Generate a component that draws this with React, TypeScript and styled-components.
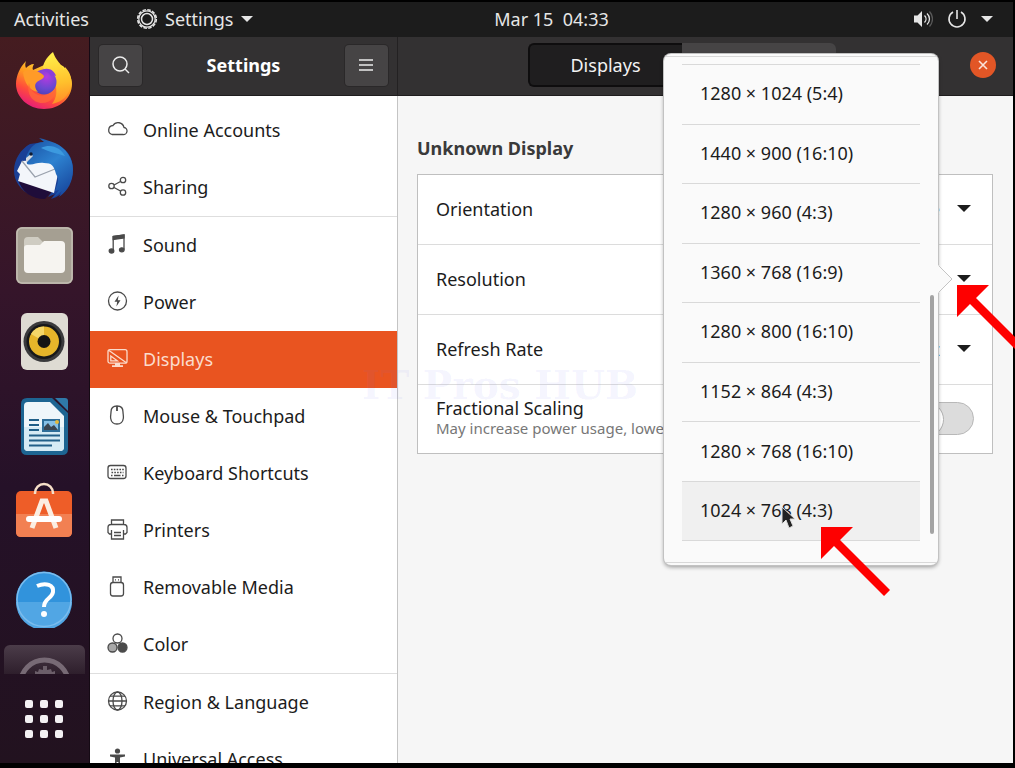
import React from 'react';
import styled, { createGlobalStyle } from 'styled-components';

const GlobalStyle = createGlobalStyle`
  * { box-sizing: border-box; }
  body { margin: 0; background: #000; }
  body, button, input { font-family: "Noto Sans", "Open Sans", sans-serif; font-size: 18px; line-height: 24px; }
  button { border: 0; padding: 0; background: none; color: inherit; cursor: pointer; }
  svg { display: block; flex: none; }
`;

const Desktop = styled.div`
  height: 100vh;
  padding: 2px 2px 5px 0;
  display: flex;
  flex-direction: column;
  overflow: hidden;
  background: #000;
`;

const TopBar = styled.header`
  flex: none;
  height: 35px;
  display: grid;
  grid-template-columns: 5fr auto 4fr;
  align-items: center;
  padding: 0 20px 2px 14px;
  background: #1c1c1c;
  color: #e6e6e6;
`;

const BarGroup = styled.div<{ $end?: boolean }>`
  display: flex;
  align-items: center;
  justify-content: ${(p) => (p.$end ? 'flex-end' : 'flex-start')};
  gap: ${(p) => (p.$end ? '14px' : '47px')};
`;

const BarButton = styled.button`
  display: flex;
  align-items: center;
  gap: 7px;
  white-space: pre;
`;

const Workspace = styled.div`
  flex: 1;
  min-height: 0;
  display: flex;
`;

const Dock = styled.nav`
  flex: none;
  width: 90px;
  padding: 18px 4px 24px 3px;
  display: flex;
  flex-direction: column;
  align-items: center;
  justify-content: space-between;
  background: linear-gradient(#451c20, #35152a 35%, #251128 62%, #22121f);
  border-right: 1px solid #150a14;
`;

const DockApps = styled.div`
  display: flex;
  flex-direction: column;
  align-items: center;
  gap: 30px;
`;

const DockButton = styled.button`
  display: flex;
  align-items: center;
  justify-content: center;
  width: 56px;
  height: 56px;
`;

const DockTile = styled.button`
  width: 81px;
  height: 29px;
  margin-top: -12px;
  overflow: hidden;
  border-radius: 6px 6px 0 0;
  background: linear-gradient(#4b3c49, #2e1f2c);
`;

const Window = styled.div`
  flex: 1;
  min-width: 0;
  display: grid;
  grid-template-columns: 308px 1fr;
  grid-template-rows: 59px 1fr;
`;

const SideHeader = styled.div`
  display: flex;
  align-items: center;
  justify-content: space-between;
  padding: 0 9px 2px;
  background: #333132;
  border-right: 1px solid #232122;
  border-bottom: 1px solid #1f1d1e;
  color: #fff;
`;

const HeaderTitle = styled.h1`
  margin: 0;
  font-size: 18px;
  line-height: 24px;
  font-weight: 700;
`;

const HeaderButton = styled.button`
  width: 43px;
  height: 41px;
  display: grid;
  place-items: center;
  border-radius: 4px;
  background: #464445;
  box-shadow: 0 0 0 1px #2a2829;
  color: #ececec;
`;

const MainHeader = styled.div`
  display: grid;
  grid-template-columns: 1fr auto 1fr;
  align-items: center;
  padding: 0 17px 2px 0;
  background: #333132;
  border-bottom: 1px solid #1f1d1e;
  color: #f2f2f2;
`;

const Switcher = styled.div`
  grid-column: 2;
  display: flex;
  margin-right: 31px;
`;

const SwitcherTab = styled.button<{ $active?: boolean }>`
  width: 154px;
  height: 44px;
  border: 2px solid ${(p) => (p.$active ? '#0e0d0e' : '#464445')};
  border-radius: ${(p) => (p.$active ? '6px 0 0 6px' : '0 6px 6px 0')};
  border-right-width: ${(p) => (p.$active ? 0 : 2)}px;
  background: ${(p) => (p.$active ? '#1f1e1f' : '#464445')};
`;

const CloseButton = styled.button`
  justify-self: end;
  width: 26px;
  height: 26px;
  display: grid;
  place-items: center;
  border-radius: 50%;
  background: #e25626;
  color: #fbe3da;
`;

const Sidebar = styled.nav`
  min-height: 0;
  overflow: hidden;
  padding-top: 6px;
  background: #fff;
  border-right: 1px solid #c4c4c4;
`;

const SideGroup = styled.ul`
  margin: 0;
  padding: 0;
  list-style: none;
  & + & { border-top: 1px solid #dedede; }
`;

const SideLink = styled.a<{ $active?: boolean }>`
  display: flex;
  align-items: center;
  gap: 15px;
  height: 57px;
  padding: 0 0 2px 17px;
  text-decoration: none;
  white-space: nowrap;
  color: ${(p) => (p.$active ? '#fbdccc' : '#1c1c1c')};
  background: ${(p) => (p.$active ? '#e95420' : 'transparent')};
  svg { color: ${(p) => (p.$active ? '#fbdccc' : '#4a4a4a')}; }
`;

const Main = styled.main`
  min-width: 0;
  padding: 40px 20px 0 19px;
  background: #f6f6f6;
`;

const SectionTitle = styled.h2`
  margin: 0 0 14px;
  font-size: 18px;
  line-height: 24px;
  font-weight: 700;
  color: #3a3a3a;
`;

const Card = styled.div`
  background: #fff;
  border: 1px solid #bfbfbf;
`;

const Row = styled.div`
  position: relative;
  height: 70px;
  padding: 0 18px 2px;
  display: flex;
  align-items: center;
  justify-content: space-between;
  gap: 20px;
  color: #1c1c1c;
  & + & { border-top: 1px solid #dcdcdc; }
  &:first-child, &:last-child { height: 69px; }
`;

const RowText = styled.label`
  min-width: 0;
  display: flex;
  flex-direction: column;
  line-height: 20px;
`;

const RowHint = styled.span`
  font-size: 15px;
  line-height: 20px;
  color: #777;
  white-space: nowrap;
  overflow: hidden;
  text-overflow: ellipsis;
`;

const ValueButton = styled.button`
  display: flex;
  align-items: center;
  gap: 17px;
  padding-right: 3px;
`;

const Toggle = styled.input`
  appearance: none;
  flex: none;
  width: 65px;
  height: 33px;
  margin: 0;
  border: 1px solid #b8b8b8;
  border-radius: 17px;
  background: #dcdcdc;
  &::before {
    content: "";
    display: block;
    width: 33px;
    height: 33px;
    margin: -1px;
    border: 1px solid #b0b0b0;
    border-radius: 50%;
    background: #fff;
  }
`;

const Popover = styled.div`
  position: absolute;
  z-index: 2;
  right: 54px;
  top: -191px;
  width: 274px;
  height: 511px;
  padding: 2px 0;
  border-radius: 7px;
  background: #fafafa;
  box-shadow: 0 0 0 1px #c2c2c2, 0 2px 4px rgba(0, 0, 0, 0.4);
`;

const PopoverTip = styled.svg`
  position: absolute;
  left: 274px;
  top: 211px;
`;

const PopoverScroll = styled.div`
  height: 507px;
  margin: 0 2px;
  padding: 7px 16px 0;
  overflow: hidden;
  border-top: 1px solid #d8d8d8;
  border-bottom: 1px solid #d8d8d8;
`;

const ModeList = styled.div`
  height: 536px;
  display: grid;
  grid-auto-rows: 1fr;
`;

const ModeButton = styled.button<{ $hover?: boolean }>`
  padding: 0 18px 2px;
  text-align: left;
  color: #1c1c1c;
  border-top: 1px solid #d9d9d9;
  background: ${(p) => (p.$hover ? '#f0f0f0' : 'transparent')};
`;

const ScrollThumb = styled.div`
  position: absolute;
  right: 4px;
  top: 241px;
  width: 4px;
  height: 239px;
  border-radius: 2px;
  background: #a3a3a3;
`;

const Pointer = styled.svg`
  position: absolute;
  left: 117px;
  top: 452px;
`;

const Callout = styled.svg<{ $left: number; $top: number }>`
  position: absolute;
  left: ${(p) => p.$left}px;
  top: ${(p) => p.$top}px;
`;

const Watermark = styled.div`
  position: absolute;
  z-index: 1;
  left: -56px;
  top: -14px;
  font-family: "DejaVu Serif", serif;
  font-size: 39px;
  font-weight: 700;
  line-height: 28px;
  white-space: nowrap;
  color: rgba(110, 110, 240, 0.07);
  pointer-events: none;
`;

const Caret = ({ w = 14 }: { w?: number }) => (
  <svg width={w} height={w / 2} viewBox="0 0 14 7"><path d="M0 0h14L7 7z" fill="currentColor" /></svg>
);

const Glyph = ({ children, size = 21 }: { children: React.ReactNode; size?: number }) => (
  <svg width={size} height={size} viewBox="0 0 21 21" fill="none" stroke="currentColor" strokeWidth="1.3">{children}</svg>
);

const icons = {
  cloud: <Glyph><path d="M5 15.500h11a3.500 3.500 0 0 0 1-7A6 6 0 0 0 6 6.500 4.600 4.600 0 0 0 5 15.500z" /></Glyph>,
  share: <Glyph><circle cx="4.500" cy="10" r="2.700" /><circle cx="16" cy="4" r="2.700" /><circle cx="16" cy="16.500" r="2.700" /><path d="M7 9l6.500-3.500M7 11.500l6.500 3.500" /></Glyph>,
  sound: <Glyph><path d="M6.200 17V2.500L17 1v14.500" /><path d="M6.200 2.500L17 1v3L6.200 5.500z" fill="currentColor" /><ellipse cx="4.500" cy="17" rx="2.300" ry="2" fill="currentColor" /><ellipse cx="14.800" cy="15.800" rx="2.300" ry="2" fill="currentColor" /></Glyph>,
  power: <Glyph><circle cx="10.500" cy="10" r="9" /><path d="M11.600 4.500L7.500 10.700h2.700L9.400 15.500 13.500 9.300h-2.700z" fill="currentColor" stroke="none" /></Glyph>,
  display: <Glyph><rect x="1" y="1.700" width="19" height="13.500" rx="2" /><path d="M2 2.500l17 12M3.800 8v4.800h6.500z" /><path d="M8 15h5v2.300h3v1.700H5v-1.700h3z" fill="currentColor" stroke="none" /></Glyph>,
  mouse: <Glyph><path d="M10 1C5.500 1 4 3 4 7c0 2-.7 4-.3 6.500C4.200 17 6.500 19 10 19s5.800-2 6.300-5.500C16.700 11 16 9 16 7c0-4-1.500-6-6-6z" /><path d="M10 1v5" strokeWidth="1.800" /></Glyph>,
  keyboard: <Glyph><rect x="1" y="3.500" width="18" height="13" rx="2.500" /><path d="M4 7.500h13M4.500 10.500h12" strokeDasharray="1.600 1.200" /><path d="M4 13.500h1.500M7 13.500h6.500M15 13.500h1.500" /></Glyph>,
  printer: <Glyph><path d="M4.500 5.500V1h12v4.500M4 15H2.500L1 13.500v-5c0-2 1-3 3-3h13c2 0 3 1 3 3v5L18.500 15H17" /><path d="M4.500 11v9h12v-9M7 13.500h7M7 16.500h7" /></Glyph>,
  usb: <Glyph><rect x="3.500" y="6.500" width="13" height="13.500" rx="2.500" /><path d="M6 6V1h8v5M8 3.800h1M11 3.800h1" /></Glyph>,
  color: <Glyph><circle cx="10.500" cy="5.500" r="4.500" /><circle cx="5.500" cy="14.500" r="4.500" fill="#a8a8a8" /><circle cx="15.500" cy="14.500" r="4.500" fill="currentColor" /></Glyph>,
  globe: <Glyph><circle cx="10.500" cy="10" r="9" /><ellipse cx="10.500" cy="10" rx="4.500" ry="9" /><path d="M1.500 10h18M3 5.200h15M3 14.800h15" /></Glyph>,
  access: <Glyph><circle cx="10.500" cy="3" r="2.600" fill="currentColor" stroke="none" /><path d="M3 6.500h15v2l-5 1V20h-1.600v-6H9.600v6H8V9.500l-5-1z" fill="currentColor" stroke="none" /></Glyph>,
};

type IconName = keyof typeof icons;

const groups: { icon: IconName; label: string }[][] = [
  [
    { icon: 'cloud', label: 'Online Accounts' },
    { icon: 'share', label: 'Sharing' },
  ],
  [
    { icon: 'sound', label: 'Sound' },
    { icon: 'power', label: 'Power' },
    { icon: 'display', label: 'Displays' },
    { icon: 'mouse', label: 'Mouse & Touchpad' },
    { icon: 'keyboard', label: 'Keyboard Shortcuts' },
    { icon: 'printer', label: 'Printers' },
    { icon: 'usb', label: 'Removable Media' },
    { icon: 'color', label: 'Color' },
  ],
  [
    { icon: 'globe', label: 'Region & Language' },
    { icon: 'access', label: 'Universal Access' },
  ],
];

const modes = [
  '1280 × 1024 (5:4)',
  '1440 × 900 (16:10)',
  '1280 × 960 (4:3)',
  '1360 × 768 (16:9)',
  '1280 × 800 (16:10)',
  '1152 × 864 (4:3)',
  '1280 × 768 (16:10)',
  '1024 × 768 (4:3)',
  '800 × 600 (4:3)',
];

const Firefox = () => (
  <svg width="56" height="62" viewBox="0 0 56 62">
    <defs>
      <linearGradient id="ffBody" x1="0.8" y1="0.1" x2="0.3" y2="1">
        <stop offset="0" stopColor="#ffe83f" /><stop offset="0.4" stopColor="#ff9a1f" /><stop offset="0.7" stopColor="#ff4b3c" /><stop offset="1" stopColor="#e51a7c" />
      </linearGradient>
      <radialGradient id="ffGlobe" cx="0.6" cy="0.3" r="0.8">
        <stop offset="0" stopColor="#b53ae0" /><stop offset="0.6" stopColor="#6a48d0" /><stop offset="1" stopColor="#4a3fb0" />
      </radialGradient>
      <linearGradient id="ffFlame" x1="0.5" y1="0" x2="0.6" y2="1">
        <stop offset="0" stopColor="#fff04a" /><stop offset="0.6" stopColor="#ffc02c" /><stop offset="1" stopColor="#ff8b28" />
      </linearGradient>
    </defs>
    <path d="M10 9c-1 3-1 5 0 7 2-2 5-4 8-4-1 2-2 4-1 6l18-8 12 4c6 6 9 12 9 18 0 14-12 25-28 25S0 45 0 32c0-8 4-17 10-23z" fill="url(#ffBody)" />
    <path d="M37 0c2 6 5 9 8 13 2 1 2 4 2 5 2-1 2-2 2-3 5 5 7 11 6 18-2 11-9 17-19 19 5-6 6-15 2-23-3-6-9-9-11-14 1-6 5-11 10-15z" fill="url(#ffFlame)" />
    <circle cx="28" cy="30" r="12.500" fill="url(#ffGlobe)" />
    <path d="M7 20c5-3 10-2 14-1 3 2 6 3 7 5 0 3-5 4-7 6-3 2-2 7 1 10-8-1-14-9-15-20z" fill="#ff9b28" />
    <path d="M13 31c1 9 8 14 17 12 5-1 9-5 10-9 1 10-5 17-14 17-9 0-16-9-13-20z" fill="#ff663a" opacity="0.800" />
    <path d="M26 18c6-3 12 0 14 6-4-2-5 0-4 2-2-5-6-7-10-8z" fill="#8b3ddb" />
  </svg>
);

const Thunderbird = () => (
  <svg width="62" height="62" viewBox="0 0 62 62">
    <defs>
      <linearGradient id="tbBody" x1="0.2" y1="0" x2="0.8" y2="1">
        <stop offset="0" stopColor="#1c56a8" /><stop offset="0.45" stopColor="#2d82d0" /><stop offset="1" stopColor="#17459c" />
      </linearGradient>
    </defs>
    <path d="M31 4c18 0 29 12 29 27 0 14-8 26-22 30l4-5-7 3 5-7-28-6 6 11C8 53 1 43 1 33 1 21 8 11 17 6z" fill="#1a3f95" />
    <path d="M5 41l10 4 14 6 10 2-7 8C19 61 8 54 5 41z" fill="#1f0d3a" />
    <path d="M9 23l32-2 5 10-5 24L5 43l2-7-3-3z" fill="#f3f6fa" />
    <path d="M9 23l13 16 20-8" stroke="#9aa2ad" strokeWidth="1.300" fill="none" />
    <path d="M13 19C17 9 22 4 31 4L26 0c6 1 10 3 16 5 11 5 18 15 18 27 0 11-5 21-14 27l3-6-9 7 6-8-4 1c2-7 5-11 1-17-2-8-4-11-12-11-8-1-11 3-17 1z" fill="url(#tbBody)" />
    <path d="M28 10c10-5 20 0 24 8-9-3-16-4-24-8z" fill="#3c9adf" />
    <path d="M13 20l5-4 2 2-7 7z" fill="#d8dbe0" /><circle cx="18" cy="16" r="1.700" fill="#0f1b33" />
  </svg>
);

const Files = () => (
  <svg width="57" height="57" viewBox="0 0 57 57">
    <rect width="57" height="57" rx="6" fill="#a59f92" /><rect x="1" y="1" width="55" height="55" rx="5" fill="none" stroke="#c2bdb2" strokeWidth="1.500" />
    <path d="M8 43V14q0-4 4-4h10l5 5h18q4 0 4 4v24z" fill="#cfccc2" />
    <path d="M8 21q0-3 3-3h13l4-4h17q4 0 4 4v24q0 4-4 4H12q-4 0-4-4z" fill="#f6f4f0" />
  </svg>
);

const Rhythmbox = () => (
  <svg width="56" height="57" viewBox="0 0 56 57">
    <rect x="5" width="47" height="57" rx="6" fill="#dedbd3" /><circle cx="28" cy="28.500" r="20.500" fill="#3a3a3c" /><circle cx="28" cy="28.500" r="17.500" fill="#17181a" />
    <circle cx="28" cy="28.500" r="15" fill="#e6b52a" /><path d="M28 28.500L15 21a15 15 0 0 1 13-7.500z" fill="#f5d768" /><circle cx="28" cy="28.500" r="6.500" fill="#141414" />
  </svg>
);

const Writer = () => (
  <svg width="56" height="58" viewBox="0 0 56 58">
    <path d="M11 0h25l16 15v36q0 6-6 6H11q-6 0-6-6V6q0-6 6-6z" fill="#1d6592" />
    <path d="M39 0h10q3 0 3 3v10z" fill="#2f79a8" />
    <path d="M12 4h22l14 14v31q0 4-4 4H12q-4 0-4-4V8q0-4 4-4z" fill="#eef6fa" />
    <path d="M8 29h40v20q0 4-4 4H12q-4 0-4-4z" fill="#d5ebf5" />
    <path d="M13 22h10M13 27h10M13 32h10M13 37.500h31M13 42.500h31M13 47.500h23" stroke="#205f88" strokeWidth="2.200" />
    <rect x="26" y="21" width="18" height="13" fill="#2d6d98" /><rect x="28" y="23" width="14" height="9" fill="#86c0e5" /><path d="M28 32v-3l4-4 3 4 3-2 4 5z" fill="#3b4550" /><circle cx="41" cy="24" r="2" fill="#e3b83a" />
  </svg>
);

const Software = () => (
  <svg width="56" height="62" viewBox="0 0 56 62">
    <rect y="9" width="56" height="46" rx="5" fill="#ee5d28" /><path d="M0 32h56v18q0 5-5 5H5q-5 0-5-5z" fill="#f28052" />
    <path d="M19 12v-1a9 9 0 0 1 18 0v1" fill="none" stroke="#f6dfc8" strokeWidth="2.500" />
    <path d="M16 46l10-27h4l10 27" fill="none" stroke="#fbeee2" strokeWidth="5" /><rect x="10" y="34" width="36" height="6" rx="3" fill="#fff" />
  </svg>
);

const Help = () => (
  <svg width="56" height="57" viewBox="0 0 56 57">
    <circle cx="28" cy="28.500" r="28" fill="#3193dc" /><path d="M0 31h56a28 28 0 0 1-56 0z" fill="#51a6e4" /><circle cx="28" cy="28.500" r="27" fill="none" stroke="#7bbced" strokeWidth="1.500" />
    <path d="M21 15c9-4 17-1 16 6-1 7-9 6-9 15" fill="none" stroke="#fff" strokeWidth="4" /><circle cx="28" cy="43" r="3" fill="#fff" />
  </svg>
);

const DockGear = () => (
  <svg width="81" height="29" viewBox="0 0 81 29">
    <circle cx="40.500" cy="39" r="24" fill="none" stroke="#776a75" strokeWidth="5" />
    <path d="M31 29v-3l3 1 1-3 4 1v-4h4v4l4-1 1 3 3-1v3z" fill="#6b5e69" />
  </svg>
);

const AppGrid = () => (
  <svg width="40" height="40" viewBox="0 0 40 40" fill="#f3f1f3">
    {[0, 15, 30].map((y) => [0, 15, 30].map((x) => <rect key={`${x}-${y}`} x={x + 1} y={y + 1} width="8" height="8" rx="2" />))}
  </svg>
);

const dockApps = [
  { name: 'Firefox', art: <Firefox /> },
  { name: 'Thunderbird', art: <Thunderbird /> },
  { name: 'Files', art: <Files /> },
  { name: 'Rhythmbox', art: <Rhythmbox /> },
  { name: 'Writer', art: <Writer /> },
  { name: 'Software', art: <Software /> },
  { name: 'Help', art: <Help /> },
];

const RedArrow = ({ left, top }: { left: number; top: number }) => (
  <Callout $left={left} $top={top} width="69" height="69" viewBox="0 0 69 69">
    <path d="M0 0h32L19 13l50 50-6 6L13 19 0 32z" fill="#fe0000" />
  </Callout>
);

const ResolutionPopover = () => (
  <Popover>
    <PopoverTip width="15" height="28" viewBox="0 0 15 28">
      <path d="M0 0l14 14L0 28z" fill="#fafafa" /><path d="M1 1l13 13L1 27" fill="none" stroke="#c4c4c4" />
    </PopoverTip>
    <PopoverScroll>
      <ModeList>
        {modes.map((mode) => <ModeButton key={mode} $hover={mode.startsWith('1024')}>{mode}</ModeButton>)}
      </ModeList>
    </PopoverScroll>
    <ScrollThumb />
    <Pointer width="16" height="24" viewBox="0 0 16 24">
      <path d="M1 1v17l4-4 3 8 4-2-3-7h5z" fill="#222" stroke="#ddd" />
    </Pointer>
    <RedArrow left={157} top={473} />
    <RedArrow left={293} top={231} />
  </Popover>
);

export default function App() {
  return (
    <>
      <GlobalStyle />
      <Desktop>
        <TopBar>
          <BarGroup>
            <BarButton>Activities</BarButton>
            <BarButton>
              <svg width="22" height="22" viewBox="0 0 22 22" fill="none" stroke="currentColor">
                <circle cx="11" cy="11" r="8.200" strokeWidth="1.200" /><circle cx="11" cy="11" r="5.500" strokeWidth="1.500" />
                <circle cx="11" cy="11" r="9.300" strokeWidth="1.600" strokeDasharray="3.500 1.370" />
              </svg>
              Settings
              <Caret w={12} />
            </BarButton>
          </BarGroup>
          <BarButton>{'Mar 15  04:33'}</BarButton>
          <BarGroup $end>
            <BarButton aria-label="Volume">
              <svg width="20" height="20" viewBox="0 0 20 20" fill="none" stroke="currentColor" strokeWidth="1.300">
                <path d="M1 6.500h3.500L9 2v16l-4.500-4.500H1z" fill="currentColor" stroke="none" />
                <path d="M11.500 6.500c2 2 2 5 0 7M14 4.500c3.300 3 3.300 8 0 11" /><path d="M16.500 2.500c4 4.500 4 10.500 0 15" opacity="0.300" />
              </svg>
            </BarButton>
            <BarButton aria-label="Power">
              <svg width="20" height="20" viewBox="0 0 20 20" fill="none" stroke="currentColor" strokeWidth="1.600"><path d="M10 1v9M6 3a8 8 0 1 0 8 0" /></svg>
            </BarButton>
            <BarButton aria-label="System menu"><Caret w={12} /></BarButton>
          </BarGroup>
        </TopBar>
        <Workspace>
          <Dock>
            <DockApps>
              {dockApps.map((app) => <DockButton key={app.name} aria-label={app.name}>{app.art}</DockButton>)}
              <DockTile aria-label="Settings"><DockGear /></DockTile>
            </DockApps>
            <button aria-label="Show Applications"><AppGrid /></button>
          </Dock>
          <Window>
            <SideHeader>
              <HeaderButton aria-label="Search">
                <svg width="20" height="20" viewBox="0 0 20 20" fill="none" stroke="currentColor" strokeWidth="1.500"><circle cx="9" cy="9" r="7" /><path d="M14 14l4 4" /></svg>
              </HeaderButton>
              <HeaderTitle>Settings</HeaderTitle>
              <HeaderButton aria-label="Menu">
                <svg width="14" height="14" viewBox="0 0 14 14" fill="none" stroke="currentColor" strokeWidth="1.500"><path d="M0 2h14M0 7h14M0 12h14" /></svg>
              </HeaderButton>
            </SideHeader>
            <MainHeader>
              <Switcher>
                <SwitcherTab $active>Displays</SwitcherTab>
                <SwitcherTab aria-label="Night Light" />
              </Switcher>
              <CloseButton aria-label="Close">
                <svg width="10" height="10" viewBox="0 0 10 10" stroke="currentColor" strokeWidth="1.600"><path d="M1 1l8 8M9 1L1 9" /></svg>
              </CloseButton>
            </MainHeader>
            <Sidebar>
              {groups.map((group) => (
                <SideGroup key={group[0].label}>
                  {group.map((item) => (
                    <li key={item.label}>
                      <SideLink href="#" $active={item.label === 'Displays'}>{icons[item.icon]}{item.label}</SideLink>
                    </li>
                  ))}
                </SideGroup>
              ))}
            </Sidebar>
            <Main>
              <SectionTitle>Unknown Display</SectionTitle>
              <Card>
                <Row>
                  <span>Orientation</span>
                  <ValueButton>Landscape<Caret /></ValueButton>
                </Row>
                <Row>
                  <span>Resolution</span>
                  <ValueButton aria-label="Resolution"><Caret /></ValueButton>
                  <ResolutionPopover />
                </Row>
                <Row>
                  <span>Refresh Rate</span>
                  <ValueButton>60.00 Hz<Caret /></ValueButton>
                </Row>
                <Row>
                  <Watermark>IT Pros HUB</Watermark>
                  <RowText htmlFor="fractional">
                    Fractional Scaling
                    <RowHint>May increase power usage, lower speed, or reduce display sharpness.</RowHint>
                  </RowText>
                  <Toggle id="fractional" type="checkbox" />
                </Row>
              </Card>
            </Main>
          </Window>
        </Workspace>
      </Desktop>
    </>
  );
}
